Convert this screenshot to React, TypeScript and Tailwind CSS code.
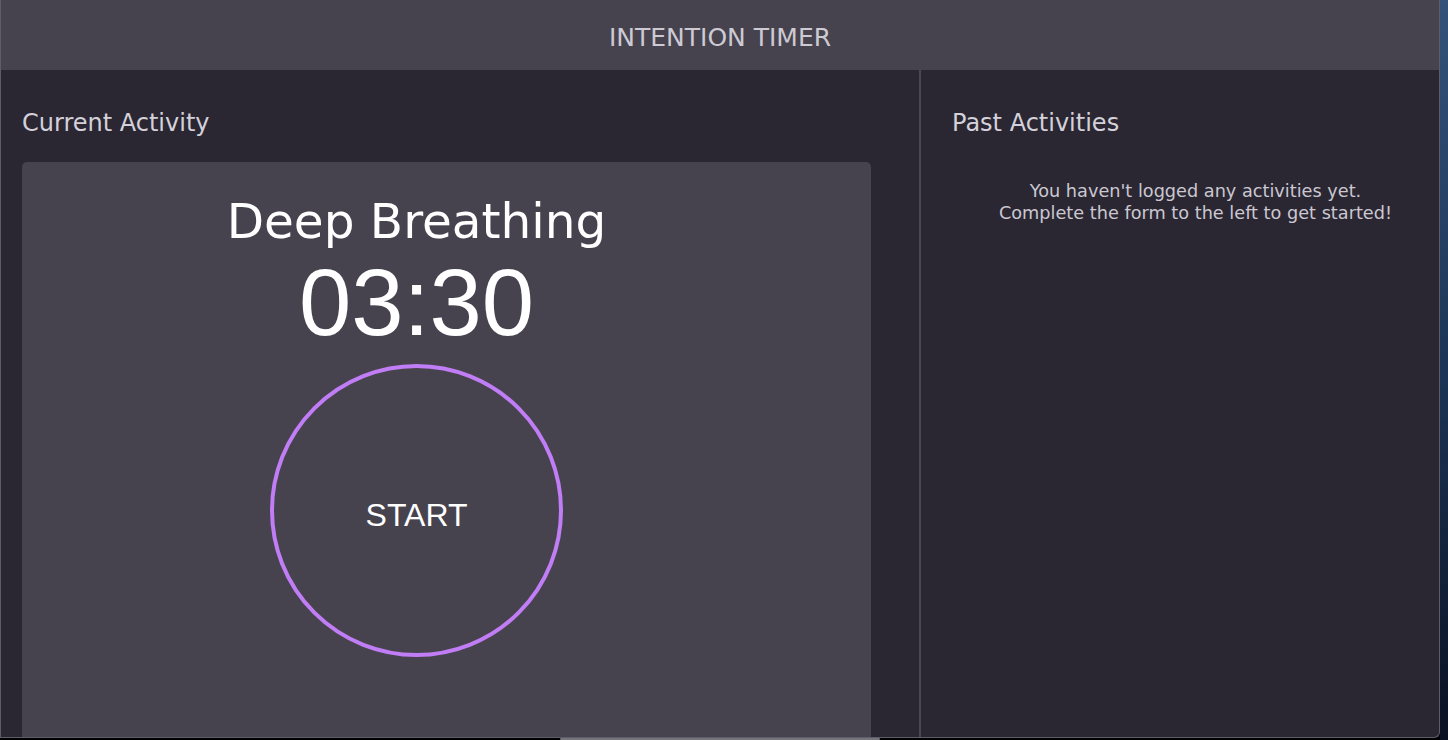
import React from "react";

const sans = { fontFamily: '"DejaVu Sans", "Noto Sans", sans-serif' };

function CurrentActivity() {
  return (
    <div className="flex flex-col w-[920px] h-full border-r-2 border-[#4a4754] pl-[21px] pt-[35px]">
      <h2 className="text-[24px] leading-[36px] text-[#d4d1da] mb-[21px]">Current Activity</h2>
      <div className="flex-1 w-[849px] rounded-t-[5px] bg-[#46434f]">
        <div className="w-[789px] flex flex-col items-center pt-[30px]">
          <div className="text-[48.5px] leading-[1.2] text-white">Deep Breathing</div>
          <div
            className="text-[94px] leading-none text-white mt-[6px]"
            style={{ fontFamily: '"Liberation Sans", Arial, sans-serif' }}
          >
            03:30
          </div>
          <button
            className="mt-[14px] w-[293px] h-[293px] rounded-full border-4 border-[#c17df5] flex items-center justify-center pt-[8px] text-[32px] text-white"
            style={{ fontFamily: '"Liberation Sans", Arial, sans-serif' }}
          >
            START
          </button>
        </div>
      </div>
    </div>
  );
}

function PastActivities() {
  return (
    <div className="flex flex-col flex-1 h-full pl-[31px] pt-[35px]">
      <h2 className="text-[24px] leading-[36px] text-[#d4d1da]">Past Activities</h2>
      <p className="mt-[39px] text-center text-[17.7px] leading-[22px] text-[#cbc8d1]">
        You haven't logged any activities yet.
        <br />
        Complete the form to the left to get started!
      </p>
    </div>
  );
}

export default function App() {
  return (
    <div className="flex w-[1448px] h-[740px] bg-black overflow-hidden" style={sans}>
      <div className="flex flex-col w-[1440px]">
        <div className="flex flex-col h-[738px] bg-[#2a2733] border-l border-r border-b border-[#5f5c69] rounded-br-[6px] overflow-hidden">
          <header className="h-[70px] shrink-0 bg-[#46434f] flex items-center justify-center pt-[5px]">
            <h1 className="text-[25px] text-[#cdcad3]">INTENTION TIMER</h1>
          </header>
          <div className="flex flex-1 min-h-0">
            <CurrentActivity />
            <PastActivities />
          </div>
        </div>
        <div className="h-[2px] flex">
          <div className="ml-[560px] w-[320px] h-[2px] bg-[#77757c] rounded-full" />
        </div>
      </div>
      <div className="w-[8px] h-full bg-gradient-to-b from-[#34527a] via-[#1c3556] to-[#0a1122]" />
    </div>
  );
}
